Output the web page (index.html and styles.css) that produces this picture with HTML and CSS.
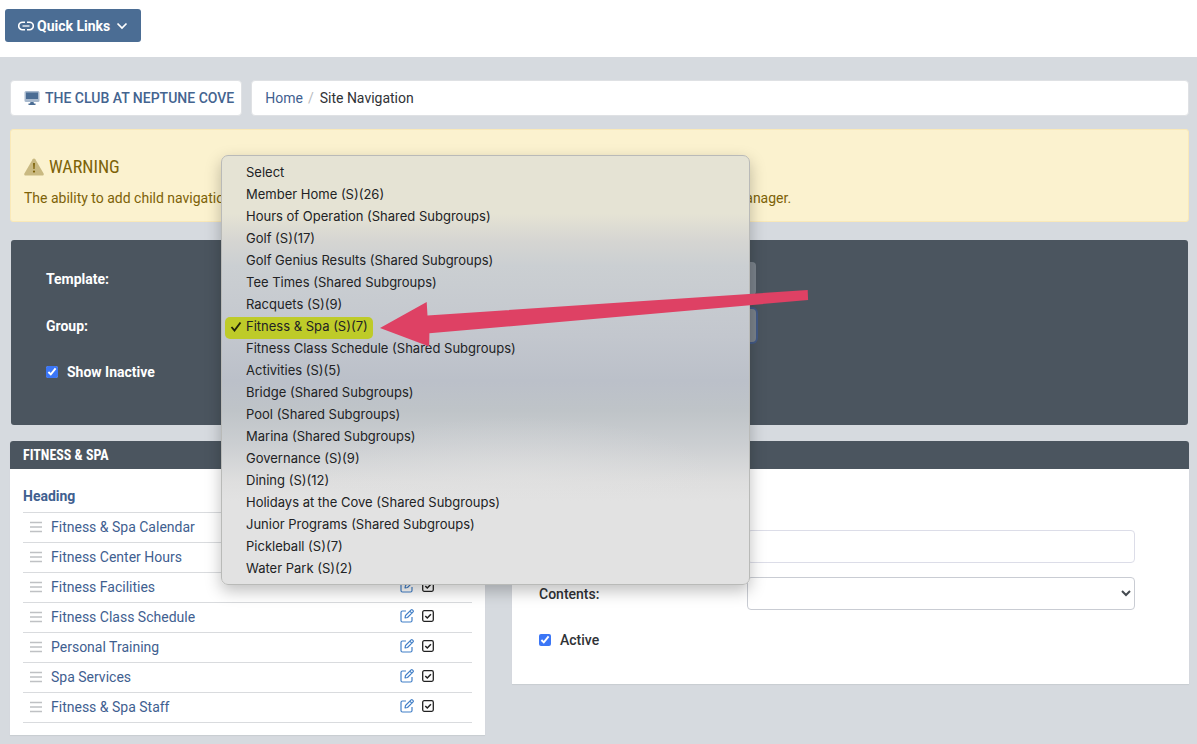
FILE: index.html
```html
<!DOCTYPE html>
<html lang="en">
<head>
<meta charset="utf-8">
<title>Site Navigation</title>
<link rel="stylesheet" href="styles.css">
</head>
<body>
<svg class="sprite" aria-hidden="true">
  <symbol id="grip" viewBox="0 0 12 12"><path d="M0 1.500h12M0 6h12M0 10.500h12" stroke="#bfc1c4" stroke-width="1.400" fill="none"/></symbol>
  <symbol id="edit" viewBox="0 0 14 14"><path d="M6 2H2.500A1.500 1.500 0 0 0 1 3.500v8A1.500 1.500 0 0 0 2.500 13h8a1.500 1.500 0 0 0 1.500-1.500V8M5 9l.500-2.500 5.600-5.600a.9.9 0 0 1 1.300 0l.7.7a.9.9 0 0 1 0 1.300L7.500 8.500zM9.800 2.200l2 2" fill="none" stroke="#4380c8" stroke-width="1.200" stroke-linejoin="round"/></symbol>
  <symbol id="check" viewBox="0 0 12 12"><rect x=".7" y=".7" width="10.600" height="10.600" rx="1.500" fill="none" stroke="#222" stroke-width="1.300"/><path d="M3.300 6l2 2 3.600-3.700" fill="none" stroke="#222" stroke-width="1.500"/></symbol>
</svg>
<header class="topbar">
  <button class="quick" type="button">
    <svg width="16" height="10" viewBox="0 0 16 10" fill="none" stroke="#fff" stroke-width="1.600"><path d="M7 1.200H4.500a3.800 3.800 0 0 0 0 7.600H7M9 1.200h2.500a3.800 3.800 0 0 1 0 7.600H9"/><path d="M4.500 5h7" stroke-width="1.300"/></svg>
    <span>Quick Links</span>
    <svg class="chev" width="12" height="8" viewBox="0 0 12 8" fill="none" stroke="#fff" stroke-width="1.700"><path d="M1.500 1.500L6 6l4.500-4.500"/></svg>
  </button>
</header>
<main class="page">
  <div class="crumbs">
    <a class="club" href="#">
      <svg width="16" height="14" viewBox="0 0 16 14"><rect x=".5" width="15" height="11" rx="1.500" fill="#a9bace"/><rect x="2" y="1.500" width="12" height="6.500" fill="#4b6d94"/><path d="M6.500 11h3l.5 1.500h1.500V14h-7v-1.500H6z" fill="#4b6d94"/></svg>
      <span>THE CLUB AT NEPTUNE COVE</span>
    </a>
    <nav class="trail" aria-label="Breadcrumb"><a href="#">Home</a><span class="sep">/</span><span>Site Navigation</span></nav>
  </div>

  <section class="warning">
    <h2><svg width="20" height="18" viewBox="0 0 20 18"><path d="M10 .5c.6 0 1 .3 1.300.8l8.300 14.200c.5 1-.1 2-1.200 2H1.600c-1.100 0-1.700-1-1.200-2L8.700 1.300C9 .8 9.400.5 10 .5z" fill="#c9b981"/><path d="M9.100 5h1.800l-.3 6H9.400z" fill="#7d6208"/><circle cx="10" cy="13.600" r="1.100" fill="#7d6208"/></svg>WARNING</h2>
    <p><span class="lead">The ability to add child navigation</span><span>manager.</span></p>
  </section>

  <form class="filters">
    <label for="template">Template:</label>
    <select id="template" class="dim"></select>
    <label for="group">Group:</label>
    <select id="group" class="dim focus"></select>
    <label class="tick"><input type="checkbox" checked><span>Show Inactive</span></label>
  </form>

  <div class="columns">
    <section class="card">
      <h3>FITNESS &amp; SPA</h3>
      <div class="list">
        <table>
          <thead><tr><th colspan="3">Heading</th></tr></thead>
          <tbody>
            <tr><td class="grip"><svg width="12" height="12"><use href="#grip"/></svg></td><td><a href="#">Fitness &amp; Spa Calendar</a></td><td class="acts"><svg width="14" height="14"><use href="#edit"/></svg><svg width="12" height="12"><use href="#check"/></svg></td></tr>
            <tr><td class="grip"><svg width="12" height="12"><use href="#grip"/></svg></td><td><a href="#">Fitness Center Hours</a></td><td class="acts"><svg width="14" height="14"><use href="#edit"/></svg><svg width="12" height="12"><use href="#check"/></svg></td></tr>
            <tr><td class="grip"><svg width="12" height="12"><use href="#grip"/></svg></td><td><a href="#">Fitness Facilities</a></td><td class="acts"><svg width="14" height="14"><use href="#edit"/></svg><svg width="12" height="12"><use href="#check"/></svg></td></tr>
            <tr><td class="grip"><svg width="12" height="12"><use href="#grip"/></svg></td><td><a href="#">Fitness Class Schedule</a></td><td class="acts"><svg width="14" height="14"><use href="#edit"/></svg><svg width="12" height="12"><use href="#check"/></svg></td></tr>
            <tr><td class="grip"><svg width="12" height="12"><use href="#grip"/></svg></td><td><a href="#">Personal Training</a></td><td class="acts"><svg width="14" height="14"><use href="#edit"/></svg><svg width="12" height="12"><use href="#check"/></svg></td></tr>
            <tr><td class="grip"><svg width="12" height="12"><use href="#grip"/></svg></td><td><a href="#">Spa Services</a></td><td class="acts"><svg width="14" height="14"><use href="#edit"/></svg><svg width="12" height="12"><use href="#check"/></svg></td></tr>
            <tr><td class="grip"><svg width="12" height="12"><use href="#grip"/></svg></td><td><a href="#">Fitness &amp; Spa Staff</a></td><td class="acts"><svg width="14" height="14"><use href="#edit"/></svg><svg width="12" height="12"><use href="#check"/></svg></td></tr>
          </tbody>
        </table>
      </div>
    </section>
    <section class="card">
      <div class="bar"></div>
      <form class="detail">
        <input class="wide" type="text" aria-label="Heading">
        <label for="contents">Contents:</label>
        <div class="pick">
          <select id="contents"></select>
          <svg width="10" height="7" viewBox="0 0 10 7" fill="none" stroke="#444a50" stroke-width="2"><path d="M1 1l4 4 4-4"/></svg>
        </div>
        <label class="tick"><input type="checkbox" checked><span>Active</span></label>
      </form>
    </section>
  </div>
</main>

<ul class="menu" role="listbox" aria-label="Group">
  <li role="option">Select</li>
  <li role="option">Member Home (S)(26)</li>
  <li role="option">Hours of Operation (Shared Subgroups)</li>
  <li role="option">Golf (S)(17)</li>
  <li role="option">Golf Genius Results (Shared Subgroups)</li>
  <li role="option">Tee Times (Shared Subgroups)</li>
  <li role="option">Racquets (S)(9)</li>
  <li role="option" aria-selected="true" class="on"><svg width="12" height="11" viewBox="0 0 12 11"><path d="M1.500 6l3 3.500L10.500 1.500" fill="none" stroke="#20240a" stroke-width="1.900"/></svg>Fitness &amp; Spa (S)(7)</li>
  <li role="option">Fitness Class Schedule (Shared Subgroups)</li>
  <li role="option">Activities (S)(5)</li>
  <li role="option">Bridge (Shared Subgroups)</li>
  <li role="option">Pool (Shared Subgroups)</li>
  <li role="option">Marina (Shared Subgroups)</li>
  <li role="option">Governance (S)(9)</li>
  <li role="option">Dining (S)(12)</li>
  <li role="option">Holidays at the Cove (Shared Subgroups)</li>
  <li role="option">Junior Programs (Shared Subgroups)</li>
  <li role="option">Pickleball (S)(7)</li>
  <li role="option">Water Park (S)(2)</li>
</ul>
<svg class="arrow" width="430" height="60" viewBox="380 289 430 60" aria-hidden="true"><path d="M380 328L426.700 302l.8 13.500L807.700 290l.4 10L429.400 333.300l-.2 13.300z" fill="#de4164"/></svg>
</body>
</html>
```

FILE: styles.css
```css
* { box-sizing: border-box; }
body {
  margin: 0;
  min-height: 100vh;
  position: relative;
  background: #d6dadf;
  color: #303236;
  font: 14px/20px Roboto, "Liberation Sans", sans-serif;
}
a { color: #3f6090; text-decoration: none; }
h2, h3, p, ul { margin: 0; padding: 0; }
svg { flex: none; }
.sprite { position: absolute; width: 0; height: 0; }

.topbar { height: 57px; padding: 9px 5px; background: #fff; }
.quick {
  display: flex; align-items: center; gap: 3px;
  height: 33px; padding: 0 13px;
  border: 0; border-radius: 3px;
  background: #4b6d94; color: #fff;
  font: bold 14px/20px Roboto, sans-serif;
}
.chev { margin-left: 3px; }

.page { padding: 23px 8px 8px 10px; }
.crumbs { display: flex; gap: 9px; }
.club, .trail {
  display: flex; align-items: center;
  height: 36px; padding: 0 13px 1px;
  border: 1px solid #dfe1e4; border-radius: 4px;
  background: #fff;
}
.club { gap: 5px; padding-right: 7px; color: #44648f; font-weight: 500; }
.trail { flex: 1; }
.sep { margin: 0 6px 0 5px; color: #b9bcc0; }

.warning {
  margin-top: 13px; padding: 25px 13px 13px;
  border: 1px solid #fae9b8; border-radius: 3px;
  background: #fbf2cf; color: #7d6208;
}
.warning h2 {
  display: flex; align-items: center; gap: 5px;
  font: 18px/24px "Liberation Sans Narrow", "Roboto Condensed", Roboto, sans-serif;
}
.warning p { display: flex; padding-top: 9px; }
.lead { flex: 0 0 709px; }

.filters {
  display: grid; grid-template-columns: 201px 509px;
  align-items: center; row-gap: 14px;
  margin: 18px 1px 0; padding: 22px 35px 37px;
  border-radius: 3px;
  background: #4b555f; color: #fff; font-weight: bold;
}
.tick { display: flex; align-items: center; gap: 9px; height: 32px; font-weight: 500; }
.filters .tick { font-weight: bold; }
.tick input { width: 12px; height: 12px; margin: 0; accent-color: #3b76f6; }
select, .wide {
  appearance: none;
  width: 100%; height: 33px;
  border: 1px solid #c9ccd3; border-radius: 4px;
  background: #fff;
  font: inherit;
}
.dim { border: 0; background: #7a828b; }
.focus { box-shadow: 0 0 0 2px #435a86; }

.columns {
  display: grid; grid-template-columns: 475fr 677fr; gap: 27px;
  align-items: start; margin-top: 16px;
}
.card { background: #fff; border-radius: 3px 3px 0 0; box-shadow: 0 1px 1px #c8ccd1; }
.card h3, .bar { height: 28px; border-radius: 3px 3px 0 0; background: #4b555f; }
.card h3 {
  padding: 0 13px; color: #fff;
  font: bold 14px/28px "Liberation Sans Narrow", "Roboto Condensed", Roboto, sans-serif;
}
.list { padding: 13px 13px 12px; }
table { width: 100%; border-collapse: collapse; }
th, td { height: 30px; padding: 0 0 1px; border-bottom: 1px solid #d9dbde; text-align: left; }
th { color: #3f6090; }
.grip { width: 28px; padding: 0 0 2px 7px; }
td svg { vertical-align: middle; }
.acts { width: 72px; padding-bottom: 4px; }
.acts svg + svg { margin-left: 8px; }

.detail {
  display: grid; grid-template-columns: 208px 1fr;
  row-gap: 14px; align-items: center;
  padding: 61px 54px 28px 27px;
  font-weight: 500;
}
.wide { grid-column: 2; border-color: #dcdde8; }
.pick { display: grid; align-items: center; }
.pick > * { grid-area: 1 / 1; }
.pick svg { justify-self: end; margin-right: 4px; pointer-events: none; }

.menu {
  position: absolute; left: 221px; top: 155px;
  width: 529px; padding: 5px 3px;
  border: 1px solid #b9bab8; border-radius: 7px;
  background:
    radial-gradient(ellipse 200px 60px at 56% 75%, #e2e2e270, #e2e2e200),
    linear-gradient(#e5e3d4 0, #e5e3d4 58px, #d5d5d2 86px, #cbcfd2 110px, #c3c7ce 180px, #bbc0c9 225px, #bfc4c8 255px, #cccfd2 290px, #dedede 325px, #e2e2e2 345px);
  box-shadow: 0 6px 16px #00000040;
  color: #212224;
  font: 13px/22px Inter, sans-serif;
  list-style: none;
  isolation: isolate;
}
.menu li { padding-left: 21px; }
.menu .on {
  position: relative;
  display: flex; align-items: center; gap: 4px;
  width: max-content; height: 22px; padding: 0 5px;
}
.on::before {
  content: "";
  position: absolute; inset: 2px 0 -2px; z-index: -1;
  border-radius: 5px;
  background: #becb29;
}
.arrow { position: absolute; left: 380px; top: 289px; }
```
